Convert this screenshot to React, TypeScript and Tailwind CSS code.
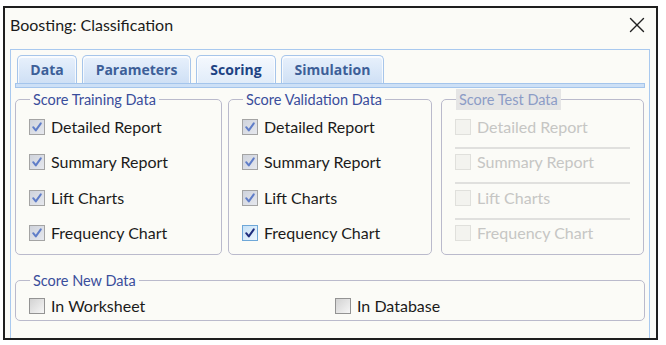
import { X } from "lucide-react";

type BoxState = "checked" | "active" | "off" | "disabled";

const trainingItems = ["Detailed Report", "Summary Report", "Lift Charts", "Frequency Chart"];

function CheckBox({ state }: { state: BoxState }) {
  const frame =
    state === "active"
      ? "border-[#6ea7d8] bg-gradient-to-br from-[#c6e1f7] to-[#eef7fe]"
      : state === "checked"
        ? "border-[#a4a4a4] bg-gradient-to-br from-[#cfd3dc] to-[#e6e8ee]"
        : state === "off"
          ? "border-[#939393] bg-gradient-to-br from-[#d2d2d2] to-[#f6f6f6]"
          : "border-[#e0e0dc] bg-[#f3f3ef]";

  return (
    <span className={`flex h-[16px] w-[16px] shrink-0 items-center justify-center border ${frame}`}>
      {state === "checked" || state === "active" ? (
        <svg viewBox="0 0 14 14" className="h-[14px] w-[14px]">
          <path
            d="M3.2 7.2 L5.8 10.4 L10.8 3.4"
            fill="none"
            stroke={state === "active" ? "#1f2d7d" : "#5f7dc8"}
            strokeWidth={2}
            strokeLinecap="round"
            strokeLinejoin="round"
          />
        </svg>
      ) : null}
    </span>
  );
}

function CheckRow({ label, state }: { label: string; state: BoxState }) {
  return (
    <div className="flex h-[20px] items-center gap-[6px]">
      <CheckBox state={state} />
      <span className={`text-[16px] ${state === "disabled" ? "text-[#c6c6c4]" : "text-[#1b1b1b]"}`}>{label}</span>
    </div>
  );
}

function ScoreGroup({
  title,
  width,
  states,
  disabled = false,
  className = "",
}: {
  title: string;
  width: string;
  states: BoxState[];
  disabled?: boolean;
  className?: string;
}) {
  return (
    <fieldset className={`${width} ${className} h-[166px] rounded-[5px] border border-[#babacc] px-[13px]`}>
      <legend
        className={`ml-[1px] h-[21px] px-[3px] text-[14.5px] leading-[21px] ${
          disabled ? "bg-[#e5e5e5] text-[#8c9cc6]" : "text-[#3a4d9b]"
        }`}
      >
        {title}
      </legend>
      <div className="pt-[6.5px]">
        {trainingItems.map((label, i) => (
          <div key={label}>
            <CheckRow label={label} state={states[i]} />
            {i < trainingItems.length - 1 ? (
              <div className={`mb-[3.5px] mt-[10px] h-[2px] ${disabled ? "bg-[#e0e0de]" : ""}`} />
            ) : null}
          </div>
        ))}
      </div>
    </fieldset>
  );
}

function Tab({ label, width, selected = false }: { label: string; width: string; selected?: boolean }) {
  return (
    <div
      className={`${width} flex h-[28px] items-center justify-center rounded-t-[5px] border border-b-0 border-[#a6c5ea] font-['Open_Sans',sans-serif] text-[14px] font-bold shadow-[inset_0_1px_0_1px_rgba(255,255,255,0.75)] ${
        selected
          ? "bg-gradient-to-b from-[#f5f9fe] to-[#e1ecf9] text-[#1d4383]"
          : "bg-gradient-to-b from-[#e8f1fc] to-[#cfe0f5] text-[#3d5f98]"
      }`}
    >
      {label}
    </div>
  );
}

export default function App() {
  return (
    <div className="h-[345px] w-[666px] bg-white pl-[3px] pt-[6px] font-['Lato','Liberation_Sans',sans-serif]">
      <div className="flex h-[334px] w-[655px] flex-col border-2 border-[#1e1e1e] bg-[#fbfbf7]">
        <div className="flex h-[33px] items-center justify-between pl-[5px] pr-[6px]">
          <span className="text-[16px] text-[#1b1b1b]">Boosting: Classification</span>
          <X className="h-[26px] w-[26px] text-[#222]" strokeWidth={1.3} />
        </div>

        <div className="ml-[5px] mr-[6px] mt-[8px] flex-1 border border-b-0 border-[#a9c9ef] px-[4px]">
          <div className="flex gap-[5px] pl-[2px] pt-[5px]">
            <Tab label="Data" width="w-[60px]" />
            <Tab label="Parameters" width="w-[109px]" />
            <Tab label="Scoring" width="w-[80px]" selected />
            <Tab label="Simulation" width="w-[103px]" />
          </div>
          <div className="h-[5px] border border-[#a4c5ec] bg-[#cde0f6]" />

          <div className="mt-[1px] flex">
            <ScoreGroup title="Score Training Data" width="w-[207px]" states={["checked", "checked", "checked", "checked"]} />
            <ScoreGroup
              title="Score Validation Data"
              width="w-[204px]"
              className="ml-[6px]"
              states={["checked", "checked", "checked", "active"]}
            />
            <ScoreGroup
              title="Score Test Data"
              width="w-[203px]"
              className="ml-[9px]"
              disabled
              states={["disabled", "disabled", "disabled", "disabled"]}
            />
          </div>

          <fieldset className="mt-[14.5px] h-[51px] rounded-[5px] border border-[#babacc] px-[13px]">
            <legend className="ml-[1px] h-[21px] px-[3px] text-[14.5px] leading-[21px] text-[#3a4d9b]">Score New Data</legend>
            <div className="flex pt-[5px]">
              <div className="w-[306px]">
                <CheckRow label="In Worksheet" state="off" />
              </div>
              <CheckRow label="In Database" state="off" />
            </div>
          </fieldset>
        </div>
      </div>
    </div>
  );
}
